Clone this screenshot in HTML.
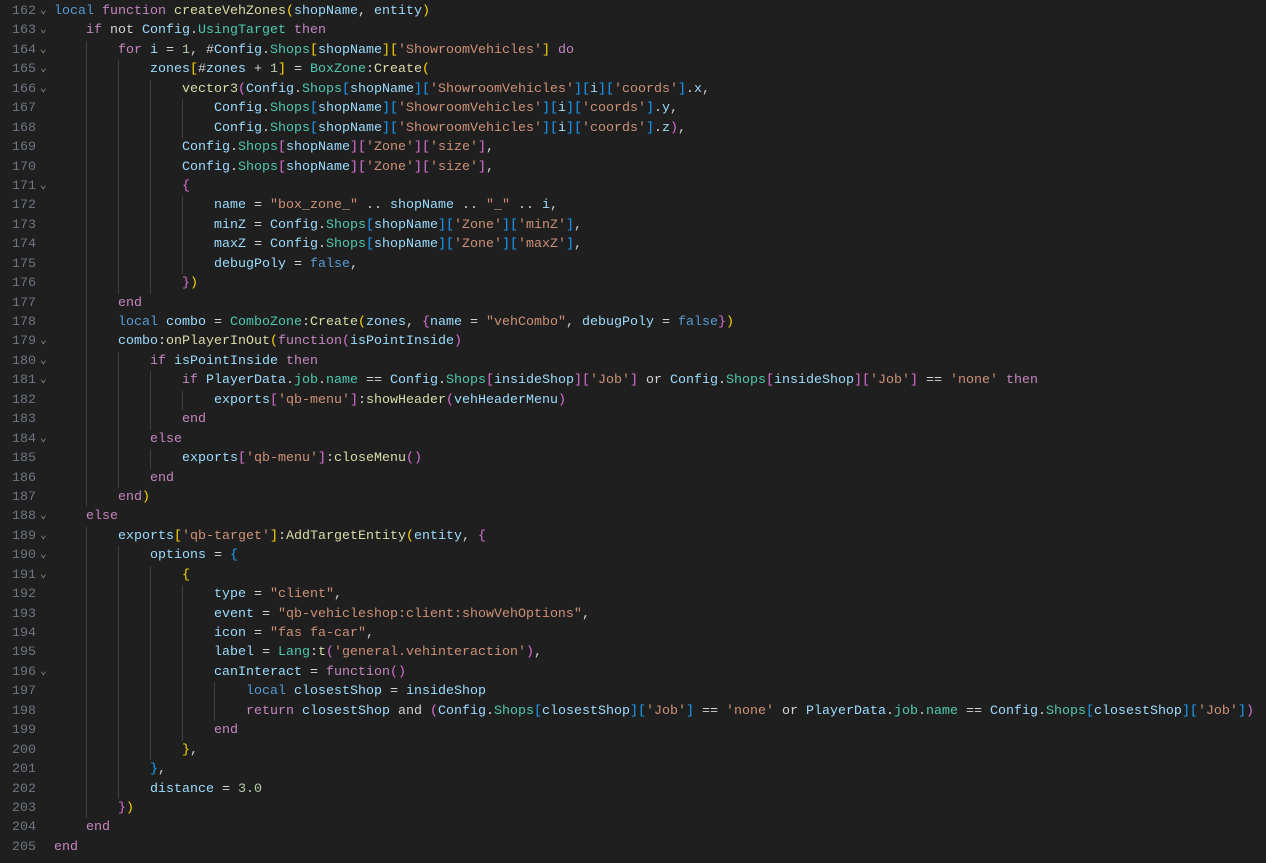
<!DOCTYPE html>
<html><head><meta charset="utf-8"><style>
html,body{margin:0;padding:0;background:#1f1f1f;width:1266px;height:863px;overflow:hidden}
#c{position:absolute;left:0;top:2px;width:1266px;font-family:"Liberation Mono",monospace;font-size:13.33px;color:#d4d4d4}
.l{height:19.44px;line-height:19.44px;position:relative;white-space:pre}
.ln{position:absolute;left:0;width:36px;text-align:right;color:#6e7681}
.fd{position:absolute;left:40px;width:10px;color:#8b8b8b;font-size:11px}
.tx{position:absolute;left:54px}
.g{display:inline-block;width:32px;height:19.44px;vertical-align:top}
.g.s{box-shadow:inset 1px 0 0 #404040}
.k{color:#c586c0}.b{color:#569cd6}.v{color:#9cdcfe}.t{color:#4ec9b0}.f{color:#dcdcaa}.s{color:#ce9178}.n{color:#b5cea8}
.y{color:#ffd700}.p{color:#da70d6}.c{color:#179fff}.o{color:#d4d4d4}
</style></head><body><div id="c">
<div class="l"><span class="ln">162</span><span class="fd">⌄</span><span class="tx"><span class="b">local</span> <span class="k">function</span> <span class="f">createVehZones</span><span class="y">(</span><span class="v">shopName</span>, <span class="v">entity</span><span class="y">)</span></span></div>
<div class="l"><span class="ln">163</span><span class="fd">⌄</span><span class="tx"><span class="g"></span><span class="k">if</span> <span class="o">not</span> <span class="v">Config</span>.<span class="t">UsingTarget</span> <span class="k">then</span></span></div>
<div class="l"><span class="ln">164</span><span class="fd">⌄</span><span class="tx"><span class="g"></span><span class="g s"></span><span class="k">for</span> <span class="v">i</span> = <span class="n">1</span>, #<span class="v">Config</span>.<span class="t">Shops</span><span class="y">[</span><span class="v">shopName</span><span class="y">][</span><span class="s">'ShowroomVehicles'</span><span class="y">]</span> <span class="k">do</span></span></div>
<div class="l"><span class="ln">165</span><span class="fd">⌄</span><span class="tx"><span class="g"></span><span class="g s"></span><span class="g s"></span><span class="v">zones</span><span class="y">[</span>#<span class="v">zones</span> + <span class="n">1</span><span class="y">]</span> = <span class="t">BoxZone</span>:<span class="f">Create</span><span class="y">(</span></span></div>
<div class="l"><span class="ln">166</span><span class="fd">⌄</span><span class="tx"><span class="g"></span><span class="g s"></span><span class="g s"></span><span class="g s"></span><span class="f">vector3</span><span class="p">(</span><span class="v">Config</span>.<span class="t">Shops</span><span class="c">[</span><span class="v">shopName</span><span class="c">][</span><span class="s">'ShowroomVehicles'</span><span class="c">][</span><span class="v">i</span><span class="c">][</span><span class="s">'coords'</span><span class="c">]</span>.<span class="v">x</span>,</span></div>
<div class="l"><span class="ln">167</span><span class="tx"><span class="g"></span><span class="g s"></span><span class="g s"></span><span class="g s"></span><span class="g s"></span><span class="v">Config</span>.<span class="t">Shops</span><span class="c">[</span><span class="v">shopName</span><span class="c">][</span><span class="s">'ShowroomVehicles'</span><span class="c">][</span><span class="v">i</span><span class="c">][</span><span class="s">'coords'</span><span class="c">]</span>.<span class="v">y</span>,</span></div>
<div class="l"><span class="ln">168</span><span class="tx"><span class="g"></span><span class="g s"></span><span class="g s"></span><span class="g s"></span><span class="g s"></span><span class="v">Config</span>.<span class="t">Shops</span><span class="c">[</span><span class="v">shopName</span><span class="c">][</span><span class="s">'ShowroomVehicles'</span><span class="c">][</span><span class="v">i</span><span class="c">][</span><span class="s">'coords'</span><span class="c">]</span>.<span class="v">z</span><span class="p">)</span>,</span></div>
<div class="l"><span class="ln">169</span><span class="tx"><span class="g"></span><span class="g s"></span><span class="g s"></span><span class="g s"></span><span class="v">Config</span>.<span class="t">Shops</span><span class="p">[</span><span class="v">shopName</span><span class="p">][</span><span class="s">'Zone'</span><span class="p">][</span><span class="s">'size'</span><span class="p">]</span>,</span></div>
<div class="l"><span class="ln">170</span><span class="tx"><span class="g"></span><span class="g s"></span><span class="g s"></span><span class="g s"></span><span class="v">Config</span>.<span class="t">Shops</span><span class="p">[</span><span class="v">shopName</span><span class="p">][</span><span class="s">'Zone'</span><span class="p">][</span><span class="s">'size'</span><span class="p">]</span>,</span></div>
<div class="l"><span class="ln">171</span><span class="fd">⌄</span><span class="tx"><span class="g"></span><span class="g s"></span><span class="g s"></span><span class="g s"></span><span class="p">{</span></span></div>
<div class="l"><span class="ln">172</span><span class="tx"><span class="g"></span><span class="g s"></span><span class="g s"></span><span class="g s"></span><span class="g s"></span><span class="v">name</span> = <span class="s">"box_zone_"</span> .. <span class="v">shopName</span> .. <span class="s">"_"</span> .. <span class="v">i</span>,</span></div>
<div class="l"><span class="ln">173</span><span class="tx"><span class="g"></span><span class="g s"></span><span class="g s"></span><span class="g s"></span><span class="g s"></span><span class="v">minZ</span> = <span class="v">Config</span>.<span class="t">Shops</span><span class="c">[</span><span class="v">shopName</span><span class="c">][</span><span class="s">'Zone'</span><span class="c">][</span><span class="s">'minZ'</span><span class="c">]</span>,</span></div>
<div class="l"><span class="ln">174</span><span class="tx"><span class="g"></span><span class="g s"></span><span class="g s"></span><span class="g s"></span><span class="g s"></span><span class="v">maxZ</span> = <span class="v">Config</span>.<span class="t">Shops</span><span class="c">[</span><span class="v">shopName</span><span class="c">][</span><span class="s">'Zone'</span><span class="c">][</span><span class="s">'maxZ'</span><span class="c">]</span>,</span></div>
<div class="l"><span class="ln">175</span><span class="tx"><span class="g"></span><span class="g s"></span><span class="g s"></span><span class="g s"></span><span class="g s"></span><span class="v">debugPoly</span> = <span class="b">false</span>,</span></div>
<div class="l"><span class="ln">176</span><span class="tx"><span class="g"></span><span class="g s"></span><span class="g s"></span><span class="g s"></span><span class="p">}</span><span class="y">)</span></span></div>
<div class="l"><span class="ln">177</span><span class="tx"><span class="g"></span><span class="g s"></span><span class="k">end</span></span></div>
<div class="l"><span class="ln">178</span><span class="tx"><span class="g"></span><span class="g s"></span><span class="b">local</span> <span class="v">combo</span> = <span class="t">ComboZone</span>:<span class="f">Create</span><span class="y">(</span><span class="v">zones</span>, <span class="p">{</span><span class="v">name</span> = <span class="s">"vehCombo"</span>, <span class="v">debugPoly</span> = <span class="b">false</span><span class="p">}</span><span class="y">)</span></span></div>
<div class="l"><span class="ln">179</span><span class="fd">⌄</span><span class="tx"><span class="g"></span><span class="g s"></span><span class="v">combo</span>:<span class="f">onPlayerInOut</span><span class="y">(</span><span class="k">function</span><span class="p">(</span><span class="v">isPointInside</span><span class="p">)</span></span></div>
<div class="l"><span class="ln">180</span><span class="fd">⌄</span><span class="tx"><span class="g"></span><span class="g s"></span><span class="g s"></span><span class="k">if</span> <span class="v">isPointInside</span> <span class="k">then</span></span></div>
<div class="l"><span class="ln">181</span><span class="fd">⌄</span><span class="tx"><span class="g"></span><span class="g s"></span><span class="g s"></span><span class="g s"></span><span class="k">if</span> <span class="v">PlayerData</span>.<span class="t">job</span>.<span class="t">name</span> == <span class="v">Config</span>.<span class="t">Shops</span><span class="p">[</span><span class="v">insideShop</span><span class="p">][</span><span class="s">'Job'</span><span class="p">]</span> <span class="o">or</span> <span class="v">Config</span>.<span class="t">Shops</span><span class="p">[</span><span class="v">insideShop</span><span class="p">][</span><span class="s">'Job'</span><span class="p">]</span> == <span class="s">'none'</span> <span class="k">then</span></span></div>
<div class="l"><span class="ln">182</span><span class="tx"><span class="g"></span><span class="g s"></span><span class="g s"></span><span class="g s"></span><span class="g s"></span><span class="v">exports</span><span class="p">[</span><span class="s">'qb-menu'</span><span class="p">]</span>:<span class="f">showHeader</span><span class="p">(</span><span class="v">vehHeaderMenu</span><span class="p">)</span></span></div>
<div class="l"><span class="ln">183</span><span class="tx"><span class="g"></span><span class="g s"></span><span class="g s"></span><span class="g s"></span><span class="k">end</span></span></div>
<div class="l"><span class="ln">184</span><span class="fd">⌄</span><span class="tx"><span class="g"></span><span class="g s"></span><span class="g s"></span><span class="k">else</span></span></div>
<div class="l"><span class="ln">185</span><span class="tx"><span class="g"></span><span class="g s"></span><span class="g s"></span><span class="g s"></span><span class="v">exports</span><span class="p">[</span><span class="s">'qb-menu'</span><span class="p">]</span>:<span class="f">closeMenu</span><span class="p">()</span></span></div>
<div class="l"><span class="ln">186</span><span class="tx"><span class="g"></span><span class="g s"></span><span class="g s"></span><span class="k">end</span></span></div>
<div class="l"><span class="ln">187</span><span class="tx"><span class="g"></span><span class="g s"></span><span class="k">end</span><span class="y">)</span></span></div>
<div class="l"><span class="ln">188</span><span class="fd">⌄</span><span class="tx"><span class="g"></span><span class="k">else</span></span></div>
<div class="l"><span class="ln">189</span><span class="fd">⌄</span><span class="tx"><span class="g"></span><span class="g s"></span><span class="v">exports</span><span class="y">[</span><span class="s">'qb-target'</span><span class="y">]</span>:<span class="f">AddTargetEntity</span><span class="y">(</span><span class="v">entity</span>, <span class="p">{</span></span></div>
<div class="l"><span class="ln">190</span><span class="fd">⌄</span><span class="tx"><span class="g"></span><span class="g s"></span><span class="g s"></span><span class="v">options</span> = <span class="c">{</span></span></div>
<div class="l"><span class="ln">191</span><span class="fd">⌄</span><span class="tx"><span class="g"></span><span class="g s"></span><span class="g s"></span><span class="g s"></span><span class="y">{</span></span></div>
<div class="l"><span class="ln">192</span><span class="tx"><span class="g"></span><span class="g s"></span><span class="g s"></span><span class="g s"></span><span class="g s"></span><span class="v">type</span> = <span class="s">"client"</span>,</span></div>
<div class="l"><span class="ln">193</span><span class="tx"><span class="g"></span><span class="g s"></span><span class="g s"></span><span class="g s"></span><span class="g s"></span><span class="v">event</span> = <span class="s">"qb-vehicleshop:client:showVehOptions"</span>,</span></div>
<div class="l"><span class="ln">194</span><span class="tx"><span class="g"></span><span class="g s"></span><span class="g s"></span><span class="g s"></span><span class="g s"></span><span class="v">icon</span> = <span class="s">"fas fa-car"</span>,</span></div>
<div class="l"><span class="ln">195</span><span class="tx"><span class="g"></span><span class="g s"></span><span class="g s"></span><span class="g s"></span><span class="g s"></span><span class="v">label</span> = <span class="t">Lang</span>:<span class="f">t</span><span class="p">(</span><span class="s">'general.vehinteraction'</span><span class="p">)</span>,</span></div>
<div class="l"><span class="ln">196</span><span class="fd">⌄</span><span class="tx"><span class="g"></span><span class="g s"></span><span class="g s"></span><span class="g s"></span><span class="g s"></span><span class="v">canInteract</span> = <span class="k">function</span><span class="p">()</span></span></div>
<div class="l"><span class="ln">197</span><span class="tx"><span class="g"></span><span class="g s"></span><span class="g s"></span><span class="g s"></span><span class="g s"></span><span class="g s"></span><span class="b">local</span> <span class="v">closestShop</span> = <span class="v">insideShop</span></span></div>
<div class="l"><span class="ln">198</span><span class="tx"><span class="g"></span><span class="g s"></span><span class="g s"></span><span class="g s"></span><span class="g s"></span><span class="g s"></span><span class="k">return</span> <span class="v">closestShop</span> <span class="o">and</span> <span class="p">(</span><span class="v">Config</span>.<span class="t">Shops</span><span class="c">[</span><span class="v">closestShop</span><span class="c">][</span><span class="s">'Job'</span><span class="c">]</span> == <span class="s">'none'</span> <span class="o">or</span> <span class="v">PlayerData</span>.<span class="t">job</span>.<span class="t">name</span> == <span class="v">Config</span>.<span class="t">Shops</span><span class="c">[</span><span class="v">closestShop</span><span class="c">][</span><span class="s">'Job'</span><span class="c">]</span><span class="p">)</span></span></div>
<div class="l"><span class="ln">199</span><span class="tx"><span class="g"></span><span class="g s"></span><span class="g s"></span><span class="g s"></span><span class="g s"></span><span class="k">end</span></span></div>
<div class="l"><span class="ln">200</span><span class="tx"><span class="g"></span><span class="g s"></span><span class="g s"></span><span class="g s"></span><span class="y">}</span>,</span></div>
<div class="l"><span class="ln">201</span><span class="tx"><span class="g"></span><span class="g s"></span><span class="g s"></span><span class="c">}</span>,</span></div>
<div class="l"><span class="ln">202</span><span class="tx"><span class="g"></span><span class="g s"></span><span class="g s"></span><span class="v">distance</span> = <span class="n">3.0</span></span></div>
<div class="l"><span class="ln">203</span><span class="tx"><span class="g"></span><span class="g s"></span><span class="p">}</span><span class="y">)</span></span></div>
<div class="l"><span class="ln">204</span><span class="tx"><span class="g"></span><span class="k">end</span></span></div>
<div class="l"><span class="ln">205</span><span class="tx"><span class="k">end</span></span></div>
</div></body></html>
